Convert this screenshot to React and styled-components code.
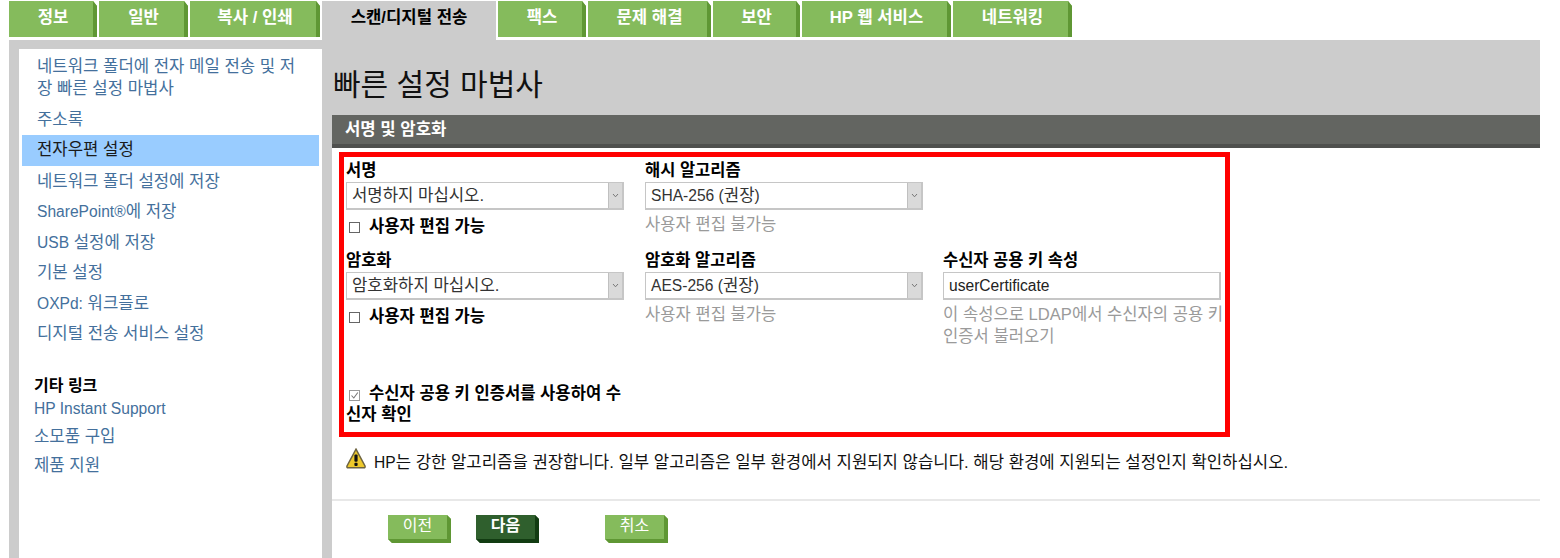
import React from 'react'
import styled, { createGlobalStyle } from 'styled-components'

const GlobalStyle = createGlobalStyle`
  html, body {
    margin: 0;
    padding: 0;
    background: #fff;
    font-family: "Liberation Sans", "Noto Sans CJK KR", sans-serif;
    font-size: 16.7px;
    color: #000;
    overflow: hidden;
  }
`

const Page = styled.div`
  width: 1560px;
  height: 558px;
  overflow: hidden;
  padding: 1px 20px 0 9px;
  box-sizing: border-box;
`
const TabBar = styled.div`
  display: flex;
  gap: 2px;
  height: 39px;
  align-items: flex-start;
`
const Tab = styled.div`
  box-sizing: border-box;
  width: ${p => p.$w}px;
  height: ${p => (p.$active ? 39 : 36)}px;
  padding: 7px 0 0 ${p => (p.$active ? 0 : 4)}px;
  text-align: center;
  font-weight: bold;
  line-height: 20px;
  color: ${p => (p.$active ? '#000' : '#fff')};
  background: ${p => (p.$active ? '#ccc' : '#85bb5c')};
  border-right: ${p => (p.$active ? 0 : '4px solid #5f9734')};
  clip-path: ${p => (p.$active ? 'none' : 'polygon(0 0, calc(100% - 4px) 0, 100% 5px, 100% 100%, 0 100%)')};
`
const Main = styled.div`
  display: flex;
  background: #ccc;
  height: 520px;
  padding: 9px 0 0 10px;
  box-sizing: border-box;
`
const Sidebar = styled.nav`
  width: 303px;
  flex: none;
  background: #fff;
  padding: 3px 3px 0;
  box-sizing: border-box;
`
const NavItem = styled.a`
  display: block;
  padding: ${p => (p.$active ? '4px 15px 5px' : '4px 15px 4px')};
  line-height: 22px;
  margin-bottom: 0.5px;
  color: ${p => (p.$active ? '#1a1a1a' : '#44709c')};
  background: ${p => (p.$active ? '#99ccff' : 'transparent')};
`
const SideHeading = styled.h4`
  margin: 26px 0 0 12px;
  font-size: 16px;
  line-height: 22px;
  font-weight: bold;
`
const SideLink = styled.a`
  display: block;
  margin: 0 0 0 12px;
  line-height: 22px;
  padding-top: ${p => p.$top}px;
  color: #44709c;
`
const En = styled.span`
  font-size: 15.6px;
`
const Content = styled.main`
  flex: 1;
  margin-left: 10px;
  min-width: 0;
`
const Title = styled.h1`
  margin: 0;
  padding-left: 1px;
  height: 66px;
  font-size: 30px;
  font-weight: normal;
  line-height: 72px;
  color: #111;
`
const Panel = styled.section`
  background: #fff;
  height: 445px;
`
const PanelHead = styled.div`
  box-sizing: border-box;
  height: 33px;
  padding: 0 13px;
  background: #636561;
  border-bottom: 4px solid #4f504e;
  color: #fff;
  font-weight: bold;
  line-height: 30px;
`
const RedBox = styled.div`
  box-sizing: border-box;
  width: 891px;
  height: 285px;
  margin: 4px 0 0 7px;
  border: 5px solid #f00;
  padding: 2px 0 0 2px;
  display: grid;
  grid-template-columns: 299px 298px 278px;
  grid-template-rows: 90px 133px 40px;
`
const Field = styled.div`
  min-width: 0;
`
const Label = styled.div`
  height: 23px;
  font-size: 16.5px;
  font-weight: bold;
  line-height: 22px;
`
const SelectBox = styled.div`
  box-sizing: border-box;
  width: 278px;
  height: 28px;
  display: flex;
  border: 1px solid #c6c6c6;
  border-right-width: 2px;
  border-bottom-width: 2px;
  background: #fff;
`
const SelectValue = styled.span`
  flex: 1;
  padding-left: 5px;
  line-height: 25px;
  color: #333;
`
const SelectArrow = styled.span`
  width: 13px;
  display: flex;
  align-items: center;
  justify-content: center;
  background: #dadada;
  border-left: 1px solid #c0c0c0;
`
const TextInput = styled.input`
  box-sizing: border-box;
  display: block;
  width: 278px;
  height: 28px;
  border: 1px solid #c6c6c6;
  border-right-width: 2px;
  border-bottom-width: 2px;
  padding: 0 0 0 5px;
  font-family: inherit;
  font-size: 15.6px;
  color: #222;
  outline: 0;
`
const CheckRow = styled.div`
  margin-top: 6px;
  font-size: 16.6px;
  font-weight: bold;
  line-height: 22px;
`
const CheckBox = styled.span`
  display: inline-flex;
  align-items: center;
  justify-content: center;
  box-sizing: border-box;
  width: 11px;
  height: 11px;
  margin: 0 9px 0 3px;
  border: 1px solid ${p => (p.$checked ? '#999' : '#666')};
  background: #fff;
  vertical-align: -1px;
`
const Hint = styled.div`
  margin: 4px -4px 0 0;
  font-size: 16.6px;
  line-height: 22px;
  color: #9a9a9a;
`
const FullRow = styled.div`
  grid-column: 1;
  padding-top: 1px;
  font-size: 16.6px;
  font-weight: bold;
  line-height: 21px;
  width: 285px;
`
const Warning = styled.div`
  display: flex;
  align-items: center;
  gap: 8px;
  margin: 12px 0 0 14px;
  height: 24px;
  color: #111;
`
const WarnGlyph = styled.svg`
  flex: none;
  margin-top: -5px;
`
const Divider = styled.hr`
  margin: 26px 0 0;
  border: 0;
  border-top: 2px solid #e8e8e8;
`
const Buttons = styled.div`
  display: flex;
  padding: 14px 0 0 56px;
`
const Btn = styled.button`
  box-sizing: border-box;
  width: 63px;
  height: 28px;
  margin-left: ${p => p.$gap}px;
  padding: 0 0 2px;
  font-family: inherit;
  font-size: 16px;
  font-weight: ${p => (p.$primary ? 'bold' : 'normal')};
  line-height: 20px;
  color: #fff;
  background: ${p => (p.$primary ? '#2f5f2d' : '#85bb5c')};
  border: 0;
  border-right: 4px solid ${p => (p.$primary ? '#123c12' : '#5f9734')};
  border-bottom: 4px solid ${p => (p.$primary ? '#123c12' : '#5f9734')};
  clip-path: polygon(0 0, calc(100% - 4px) 0, 100% 4px, 100% 100%, 4px 100%, 0 calc(100% - 4px));
`

const tabs = [
  ['정보', 88], ['일반', 89], ['복사 / 인쇄', 130], ['스캔/디지털 전송', 174, true], ['팩스', 88],
  ['문제 해결', 123], ['보안', 87], ['HP 웹 서비스', 149], ['네트워킹', 119],
]

const Chevron = () => (
  <svg width="7" height="5" viewBox="0 0 7 5">
    <path d="M1 1 L3.5 3.8 L6 1" fill="none" stroke="#777" strokeWidth="1" />
  </svg>
)

const Check = () => (
  <svg width="9" height="9" viewBox="0 0 9 9">
    <path d="M1.5 4.5 L3.8 7 L7.8 1.5" fill="none" stroke="#777" strokeWidth="1.1" />
  </svg>
)

const WarnIcon = () => (
  <WarnGlyph width="20" height="21" viewBox="0 0 20 21">
    <path d="M10 1.2 L19 18 Q19.4 19.8 18 19.8 L2 19.8 Q0.6 19.8 1 18 Z" fill="#eec92b" stroke="#6e6440" strokeWidth="1.5" />
    <rect x="8.4" y="6.4" width="3.2" height="7.4" rx="1" fill="#111" />
    <rect x="8.4" y="14.8" width="3.2" height="3.2" rx="1" fill="#111" />
  </WarnGlyph>
)

const Select = ({ children }) => (
  <SelectBox>
    <SelectValue>{children}</SelectValue>
    <SelectArrow><Chevron /></SelectArrow>
  </SelectBox>
)

const App = () => (
  <Page>
    <GlobalStyle />
    <TabBar>
      {tabs.map(([name, w, active]) => (
        <Tab key={name} $w={w} $active={active}>{name}</Tab>
      ))}
    </TabBar>
    <Main>
      <Sidebar>
        <NavItem>네트워크 폴더에 전자 메일 전송 및 저장 빠른 설정 마법사</NavItem>
        <NavItem>주소록</NavItem>
        <NavItem $active>전자우편 설정</NavItem>
        <NavItem>네트워크 폴더 설정에 저장</NavItem>
        <NavItem><En>SharePoint®</En>에 저장</NavItem>
        <NavItem><En>USB</En> 설정에 저장</NavItem>
        <NavItem>기본 설정</NavItem>
        <NavItem><En>OXPd:</En> 워크플로</NavItem>
        <NavItem>디지털 전송 서비스 설정</NavItem>
        <SideHeading>기타 링크</SideHeading>
        <SideLink $top={1}><En>HP Instant Support</En></SideLink>
        <SideLink $top={6}>소모품 구입</SideLink>
        <SideLink $top={7}>제품 지원</SideLink>
      </Sidebar>
      <Content>
        <Title>빠른 설정 마법사</Title>
        <Panel>
          <PanelHead>서명 및 암호화</PanelHead>
          <RedBox>
            <Field>
              <Label>서명</Label>
              <Select>서명하지 마십시오.</Select>
              <CheckRow><CheckBox />사용자 편집 가능</CheckRow>
            </Field>
            <Field>
              <Label>해시 알고리즘</Label>
              <Select><En>SHA-256 (</En>권장<En>)</En></Select>
              <Hint>사용자 편집 불가능</Hint>
            </Field>
            <Field />
            <Field>
              <Label>암호화</Label>
              <Select>암호화하지 마십시오.</Select>
              <CheckRow><CheckBox />사용자 편집 가능</CheckRow>
            </Field>
            <Field>
              <Label>암호화 알고리즘</Label>
              <Select><En>AES-256 (</En>권장<En>)</En></Select>
              <Hint>사용자 편집 불가능</Hint>
            </Field>
            <Field>
              <Label>수신자 공용 키 속성</Label>
              <TextInput readOnly defaultValue="userCertificate" />
              <Hint>이 속성으로 LDAP에서 수신자의 공용 키 인증서 불러오기</Hint>
            </Field>
            <FullRow>
              <CheckBox $checked><Check /></CheckBox>수신자 공용 키 인증서를 사용하여 수신자 확인
            </FullRow>
          </RedBox>
          <Warning>
            <WarnIcon />
            <span><En>HP</En>는 강한 알고리즘을 권장합니다. 일부 알고리즘은 일부 환경에서 지원되지 않습니다. 해당 환경에 지원되는 설정인지 확인하십시오.</span>
          </Warning>
          <Divider />
          <Buttons>
            <Btn>이전</Btn>
            <Btn $primary $gap={25}>다음</Btn>
            <Btn $gap={66}>취소</Btn>
          </Buttons>
        </Panel>
      </Content>
    </Main>
  </Page>
)

export default App
